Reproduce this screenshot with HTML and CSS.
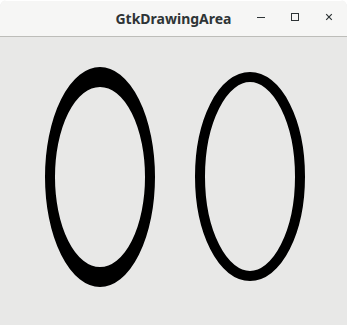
FILE: index.html
```html
<!DOCTYPE html>
<html lang="en">
<head>
    <meta charset="UTF-8">
    <title>GtkDrawingArea</title>
    <link rel="stylesheet" href="styles.css">
</head>
<body>
    <div class="window">
        <div class="titlebar">
            <span class="title">GtkDrawingArea</span>
            <div class="controls">
                <span class="btn">
                    <svg width="10" height="10" viewBox="0 0 10 10"><path d="M1 5.5h8" stroke="#2e3436" stroke-width="1"/></svg>
                </span>
                <span class="btn">
                    <svg width="10" height="10" viewBox="0 0 10 10"><rect x="1.5" y="1.5" width="7" height="7" fill="none" stroke="#2e3436" stroke-width="1"/></svg>
                </span>
                <span class="btn">
                    <svg width="10" height="10" viewBox="0 0 10 10"><path d="M2.2 2.2l5.6 5.6M7.8 2.2l-5.6 5.6" stroke="#2e3436" stroke-width="1.2"/></svg>
                </span>
            </div>
        </div>
        <div class="drawing-area">
            <svg width="347" height="288" viewBox="0 0 347 288">
                <!-- circle drawn under scale(1,2): stroke gets stretched too -->
                <g transform="translate(100,140) scale(1,2)">
                    <circle r="50" fill="none" stroke="#000" stroke-width="10"/>
                </g>
                <ellipse cx="250" cy="139.5" rx="50" ry="99.5" fill="none" stroke="#000" stroke-width="10"/>
            </svg>
        </div>
    </div>
</body>
</html>
```

FILE: styles.css
```css
* {
    margin: 0;
    padding: 0;
    box-sizing: border-box;
}

body {
    background: #ffffff;
    width: 347px;
    height: 325px;
    overflow: hidden;
}

.window {
    width: 347px;
    height: 325px;
    display: flex;
    flex-direction: column;
    border-radius: 7px 7px 0 0;
    overflow: hidden;
    background: #e8e8e7;
}

.titlebar {
    position: relative;
    height: 37px;
    flex-shrink: 0;
    background: #f6f6f5;
    border-bottom: 1px solid #bdbdb9;
    box-shadow: inset 0 1px 0 #ffffff;
    display: flex;
    align-items: center;
    justify-content: center;
}

.title {
    font-family: "Noto Sans", "DejaVu Sans", sans-serif;
    font-weight: bold;
    font-size: 14px;
    color: #2e3436;
    margin-top: 1px;
}

.controls {
    position: absolute;
    right: 13px;
    top: 12px;
    display: flex;
    gap: 24px;
}

.btn {
    width: 10px;
    height: 10px;
    display: flex;
}

.drawing-area {
    flex: 1;
    background: #e8e8e7;
}

.drawing-area svg {
    display: block;
}
```
